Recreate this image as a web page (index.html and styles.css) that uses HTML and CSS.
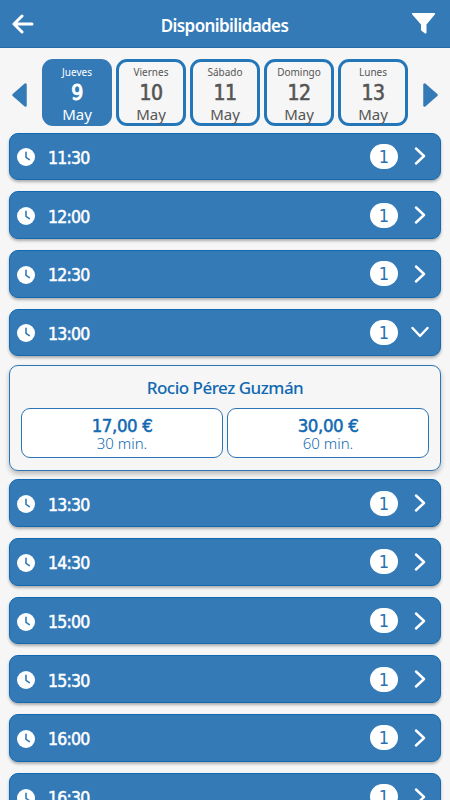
FILE: index.html
```html
<!DOCTYPE html>
<html lang="es">
<head>
  <meta charset="UTF-8" />
  <meta name="viewport" content="width=device-width, initial-scale=1" />
  <title>Disponibilidades</title>
  <link rel="stylesheet" href="styles.css">
</head>
<body>

  <header class="topbar">
    <svg class="back" viewBox="0 0 22 20"><path d="M10 2 L2 10 L10 18 M2 10 H20" /></svg>
    <h1>Disponibilidades</h1>
    <svg class="filter" viewBox="0 0 25 23"><path d="M1.5 1 H23.5 Q24.6 1.3 23.8 2.5 L15.5 12.5 V20.5 Q15.3 22.3 13.8 21.3 L10.8 19.1 Q10 18.5 10 17.5 V12.5 L1.2 2.5 Q.4 1.3 1.5 1 Z" /></svg>
  </header>

  <nav class="days">
    <svg class="arrow" viewBox="0 0 15 24"><path d="M13.5 1.5 V22.5 L1.5 12 Z" /></svg>
    <div class="day-list">
      <div class="day active"><span>Jueves</span><b>9</b><i>May</i></div>
      <div class="day"><span>Viernes</span><b>10</b><i>May</i></div>
      <div class="day"><span>Sábado</span><b>11</b><i>May</i></div>
      <div class="day"><span>Domingo</span><b>12</b><i>May</i></div>
      <div class="day"><span>Lunes</span><b>13</b><i>May</i></div>
    </div>
    <svg class="arrow" viewBox="0 0 15 24"><path d="M1.5 1.5 V22.5 L13.5 12 Z" /></svg>
  </nav>

  <main id="slots">
    <section class="detail" id="detail">
      <h2>Rocio Pérez Guzmán</h2>
      <div class="prices">
        <div class="price"><b>17,00 €</b><span>30 min.</span></div>
        <div class="price"><b>30,00 €</b><span>60 min.</span></div>
      </div>
    </section>
  </main>

  <script>
    const antes = ["11:30", "12:00", "12:30", "13:00"];
    const despues = ["13:30", "14:30", "15:00", "15:30", "16:00", "16:30"];
    const abierta = "13:00";

    function fila(hora) {
      const clase = hora === abierta ? "slot open" : "slot";
      return `<div class="${clase}">
        <svg class="clock" viewBox="0 0 18 18"><circle cx="9" cy="9" r="9" /><path d="M9 4.3 V9.3 L12.3 11.6" /></svg>
        <span class="time">${hora}</span>
        <span class="count">1</span>
        <svg class="chevron" viewBox="0 0 18 18"><path d="M5 1.5 L13 9 L5 16.5" /></svg>
      </div>`;
    }

    const detail = document.getElementById("detail");
    detail.insertAdjacentHTML("beforebegin", antes.map(fila).join(""));
    detail.insertAdjacentHTML("afterend", despues.map(fila).join(""));
  </script>

</body>
</html>
```
FILE: styles.css
```css
* {
  box-sizing: border-box;
}

body {
  margin: 0;
  height: 100vh;
  overflow: hidden;
  background: #f6f6f6;
  font-family: "Noto Sans", "Open Sans", sans-serif;
  color: #555;
}

svg {
  display: block;
  flex: none;
}

.topbar {
  height: 48px;
  padding: 0 14px 0 12px;
  background: #337ab7;
  border-bottom: 1px solid #286ca8;
  color: #fff;
  display: flex;
  align-items: center;
  justify-content: space-between;
}

.topbar h1 {
  margin: 3px 0 0 4px;
  font-size: 17px;
  font-weight: 600;
  letter-spacing: -0.6px;
}

.back {
  width: 22px;
  height: 20px;
  fill: none;
  stroke: #fff;
  stroke-width: 3;
  stroke-linecap: round;
  stroke-linejoin: round;
}

.filter {
  width: 25px;
  height: 23px;
  fill: #fff;
}

.days {
  height: 84.5px;
  padding: 11px 12px 0;
  display: flex;
  align-items: flex-start;
  justify-content: space-between;
}

.arrow {
  width: 15px;
  height: 24px;
  margin-top: 24px;
  fill: #337ab7;
  stroke: #337ab7;
  stroke-width: 2.5;
  stroke-linejoin: round;
}

.day-list {
  width: 366px;
  display: flex;
  gap: 4px;
}

.day {
  flex: 1;
  height: 67px;
  border: 3px solid #2376b8;
  border-radius: 11px;
  display: flex;
  flex-direction: column;
  align-items: center;
}

.day span {
  margin-top: 3px;
  font-size: 10px;
  line-height: 14px;
}

.day b,
.time,
.count,
.price b {
  font-family: "DejaVu Sans Condensed", "DejaVu Sans", sans-serif;
  font-stretch: condensed;
  font-weight: 400;
}

.day b {
  font-size: 21px;
  line-height: 28px;
  letter-spacing: -0.5px;
  -webkit-text-stroke: 0.6px;
}

.day i {
  font-size: 15px;
  font-style: normal;
  line-height: 15px;
}

.day.active {
  background: #337ab7;
  border-color: #337ab7;
  color: #fff;
}

.day.active b {
  -webkit-text-stroke: 1px;
}

main {
  padding: 0 9px;
}

.slot {
  height: 47.7px;
  margin-bottom: 11px;
  padding: 0 11px 0 7px;
  background: #337ab7;
  border: 1px solid #1169b2;
  border-radius: 9px;
  box-shadow: 0 2px 3px rgba(0, 0, 0, 0.3);
  color: #fff;
  display: flex;
  align-items: center;
}

.clock {
  width: 18px;
  height: 18px;
  margin-top: 2px;
  fill: #fff;
}

.clock path {
  fill: none;
  stroke: #337ab7;
  stroke-width: 1.6;
  stroke-linecap: round;
}

.time {
  margin: 3px auto 0 13px;
  font-size: 17.5px;
  letter-spacing: -0.8px;
  -webkit-text-stroke: 0.5px;
}

.count {
  width: 28px;
  height: 25px;
  border-radius: 12.5px;
  background: #fff;
  color: #2b70ae;
  font-size: 18px;
  line-height: 26px;
  text-align: center;
}

.chevron {
  width: 18px;
  height: 18px;
  margin-left: 13px;
  fill: none;
  stroke: #fff;
  stroke-width: 2.4;
  stroke-linecap: round;
  stroke-linejoin: round;
}

.open .chevron {
  transform: rotate(90deg);
}

.detail {
  height: 105.5px;
  margin: -2px 0 8.6px;
  padding: 10px 11px 0;
  border: 1px solid #2b74b5;
  border-radius: 9px;
  box-shadow: 0 3px 5px rgba(0, 0, 0, 0.25);
  color: #1169b2;
  text-align: center;
}

.detail h2 {
  margin: 0 0 8px;
  font-size: 17px;
  font-weight: 500;
  line-height: 24px;
  letter-spacing: -0.5px;
}

.prices {
  display: flex;
  gap: 4px;
}

.price {
  flex: 1;
  height: 50px;
  padding-top: 6px;
  background: #fff;
  border: 1px solid #2b74b5;
  border-radius: 9px;
  display: flex;
  flex-direction: column;
}

.price b {
  font-size: 18.5px;
  line-height: 21px;
  letter-spacing: -0.4px;
  -webkit-text-stroke: 0.5px;
}

.price span {
  font-size: 15px;
  font-weight: 300;
  line-height: 15px;
}
```
